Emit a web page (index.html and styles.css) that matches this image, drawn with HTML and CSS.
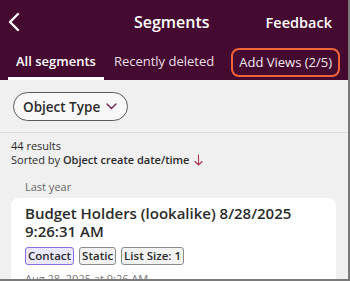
FILE: index.html
```html
<!DOCTYPE html>
<html lang="en">
<head>
  <meta charset="UTF-8">
  <meta name="viewport" content="width=device-width, initial-scale=1.0">
  <title>Segments</title>
  <link rel="stylesheet" href="styles.css">
</head>
<body>
<div class="frame">
  <div class="header">
    <div class="topbar">
      <span class="back">
        <svg width="12" height="20" viewBox="0 0 12 20"><path d="M10 2 L2 10 L10 18" fill="none" stroke="#fff" stroke-width="2.4" stroke-linecap="round" stroke-linejoin="round"/></svg>
      </span>
      <span class="title">Segments</span>
      <span class="feedback">Feedback</span>
    </div>
    <div class="tabs">
      <div class="tab active">All segments</div>
      <div class="tab">Recently deleted</div>
      <div class="tab add-views">Add Views (2/5)</div>
    </div>
  </div>

  <div class="filters">
    <button class="pill">Object Type
      <svg width="11" height="7" viewBox="0 0 11 7"><path d="M1 1 L5.5 5.5 L10 1" fill="none" stroke="#6b1a4a" stroke-width="1.3" stroke-linecap="round" stroke-linejoin="round"/></svg>
    </button>
  </div>

  <div class="results">
    <div>44 results</div>
    <div class="sorted">Sorted by <b>Object create date/time</b>
      <svg width="9" height="12" viewBox="0 0 9 12"><path d="M4.5 1 V11 M1 7.5 L4.5 11 L8 7.5" fill="none" stroke="#b0344c" stroke-width="1.1" stroke-linecap="round" stroke-linejoin="round"/></svg>
    </div>
  </div>

  <div class="group-label">Last year</div>

  <div class="card">
    <div class="card-title">Budget Holders (lookalike) 8/28/2025 9:26:31 AM</div>
    <div class="tags">
      <span class="tag contact">Contact</span>
      <span class="tag">Static</span>
      <span class="tag">List Size: 1</span>
    </div>
    <div class="date">Aug 28, 2025 at 9:26 AM</div>
  </div>
</div>
</body>
</html>
```

FILE: styles.css
```css
body {
    margin: 0;
    font-family: "Open Sans", "Noto Sans", sans-serif;
    background: #f0f0f0;
}
.frame {
    width: 348px;
    height: 279px;
    overflow: hidden;
    border-right: 2px solid #7a7a7a;
    border-bottom: 2px solid #7a7a7a;
    background: #f0f0f0;
    color: #2b2b2b;
}
.header {
    background: #450a2f;
    color: white;
    height: 80px;
}
.topbar {
    height: 44px;
    display: flex;
    align-items: center;
    padding: 0 16px 0 8px;
}
.back {
    display: flex;
    width: 60px;
}
.title {
    flex: 1;
    text-align: center;
    font-size: 16px;
    font-weight: 600;
    padding-left: 10px;
}
.feedback {
    font-size: 14.5px;
    font-weight: 600;
}
.tabs {
    display: flex;
    align-items: flex-end;
    height: 36px;
    padding-left: 8px;
}
.tab {
    font-size: 13px;
    color: #ecdfe6;
    padding: 0 10px;
    height: 36px;
    line-height: 35px;
    box-sizing: border-box;
    white-space: nowrap;
    flex-shrink: 0;
}
.tab.active {
    color: white;
    font-weight: 600;
    padding: 0 8px;
    border-bottom: 3px solid white;
    line-height: 35px;
    border-radius: 3px 3px 0 0;
}
.add-views {
    margin: 0 0 3px 7px;
    height: 29px;
    line-height: 25px;
    border: 2px solid #f0643c;
    border-radius: 8px;
    padding: 0 6px;
    color: #f3e9ee;
}
.filters {
    padding: 12px 13px 11px;
    border-bottom: 1px solid #dedede;
}
.pill {
    display: flex;
    align-items: center;
    gap: 6px;
    height: 29px;
    padding: 0 10px 0 9px;
    border: 1.5px solid #5a5a5a;
    border-radius: 15px;
    background: #f8f8f8;
    font-family: inherit;
    font-size: 13.5px;
    font-weight: 600;
    color: #2b2b2b;
}
.results {
    padding: 6px 11px 0;
    font-size: 11px;
    line-height: 14px;
}
.results b {
    font-weight: 600;
}
.sorted svg {
    vertical-align: -2px;
    margin-left: 2px;
}
.group-label {
    padding: 12px 25px 4px;
    font-size: 11px;
    color: #666;
}
.card {
    margin: 0 12px 0 11px;
    background: white;
    border-radius: 8px;
    padding: 6px 14px;
}
.card-title {
    font-size: 15px;
    font-weight: 600;
    line-height: 18px;
    color: #2b2b2b;
}
.tags {
    display: flex;
    gap: 5px;
    margin-top: 7px;
}
.tag {
    font-size: 11.5px;
    font-weight: 600;
    border: 1px solid #8a8a8a;
    border-radius: 3px;
    padding: 0 2px;
    height: 16px;
    line-height: 16px;
    background: #f2f2f2;
}
.tag.contact {
    border-color: #8a6ee0;
    background: #ece8fb;
}
.date {
    margin-top: 6px;
    font-size: 11px;
    color: #777;
}
```
